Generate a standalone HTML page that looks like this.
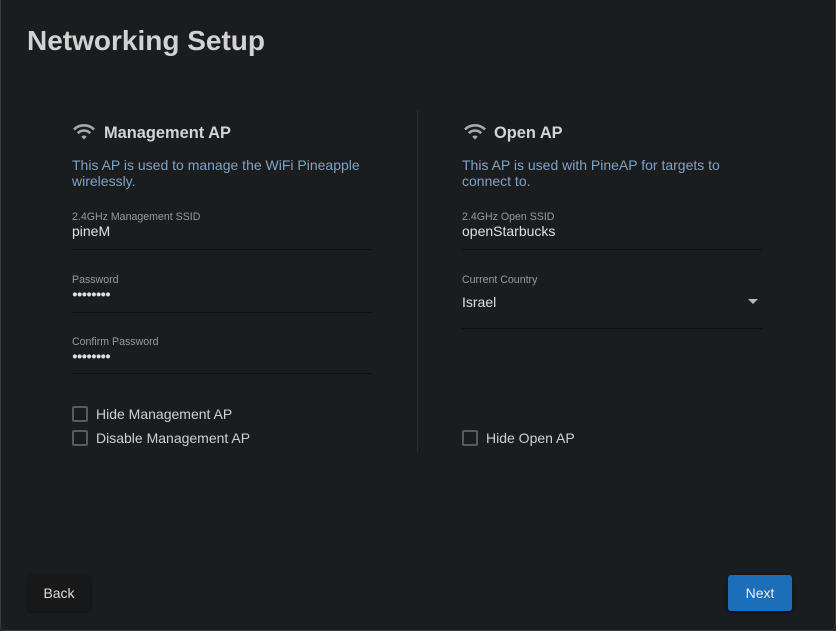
<!DOCTYPE html>
<html><head><style>
*{margin:0;padding:0;box-sizing:border-box}
body{width:836px;height:631px;background:#1b1c1e;font-family:"Liberation Sans",sans-serif;position:relative;overflow:hidden}
.frame{position:absolute;left:0;top:0;width:836px;height:631px;border:1px solid #3a3b3d;border-top:none;border-radius:0 0 4px 4px}
.a{position:absolute;white-space:nowrap}
h1{position:absolute;left:27px;top:25px;font-size:28px;font-weight:bold;color:#d2d2d2}
.h2{font-size:16.4px;font-weight:bold;color:#d4d4d4}
.desc{font-size:14px;color:#7fa3c4;line-height:16px}
.lbl{font-size:10.6px;color:#9a9a9a}
.val{font-size:14px;color:#e0e0e0}
.dots{font-size:9.5px;color:#e0e0e0;letter-spacing:-1px}
.line{position:absolute;height:1px;background:#0f1011}
.cb{position:absolute;width:16px;height:16px;border:2px solid #5a5a5a;border-radius:2px}
.cbl{font-size:14px;color:#d0d0d0}
</style></head><body>
<div class="frame"></div>
<h1>Networking Setup</h1>
<div style="position:absolute;left:417px;top:110px;width:1px;height:342px;background:#2c2d2f"></div>

<svg class="a" style="left:72px;top:123px" width="24" height="18" viewBox="0 0 24 18"><path d="M2 6.5a14 14 0 0 1 20 0" stroke="#a8a8a8" stroke-width="2.6" fill="none"/><path d="M5.8 10.2a8.6 8.6 0 0 1 12.4 0" stroke="#a8a8a8" stroke-width="2.6" fill="none"/><path d="M9.3 13.6l2.7 3 2.7-3a4 4 0 0 0-5.4 0z" fill="#a8a8a8"/></svg>
<div class="a h2" style="left:104px;top:124px">Management AP</div>
<div class="a desc" style="left:72px;top:157px">This AP is used to manage the WiFi Pineapple<br>wirelessly.</div>
<div class="a lbl" style="left:72px;top:211px">2.4GHz Management SSID</div>
<div class="a val" style="left:72px;top:223px">pineM</div>
<div class="line" style="left:72px;top:249px;width:300px"></div>
<div class="a lbl" style="left:72px;top:274px">Password</div>
<div class="a dots" style="left:72px;top:289px">●●●●●●●●</div>
<div class="line" style="left:72px;top:312px;width:300px"></div>
<div class="a lbl" style="left:72px;top:336px">Confirm Password</div>
<div class="a dots" style="left:72px;top:351px">●●●●●●●●</div>
<div class="line" style="left:72px;top:373px;width:300px"></div>
<div class="cb" style="left:72px;top:406px"></div><div class="a cbl" style="left:96px;top:406px">Hide Management AP</div>
<div class="cb" style="left:72px;top:430px"></div><div class="a cbl" style="left:96px;top:430px">Disable Management AP</div>

<svg class="a" style="left:463px;top:123px" width="24" height="18" viewBox="0 0 24 18"><path d="M2 6.5a14 14 0 0 1 20 0" stroke="#a8a8a8" stroke-width="2.6" fill="none"/><path d="M5.8 10.2a8.6 8.6 0 0 1 12.4 0" stroke="#a8a8a8" stroke-width="2.6" fill="none"/><path d="M9.3 13.6l2.7 3 2.7-3a4 4 0 0 0-5.4 0z" fill="#a8a8a8"/></svg>
<div class="a h2" style="left:494px;top:124px">Open AP</div>
<div class="a desc" style="left:462px;top:157px">This AP is used with PineAP for targets to<br>connect to.</div>
<div class="a lbl" style="left:462px;top:211px">2.4GHz Open SSID</div>
<div class="a val" style="left:462px;top:223px">openStarbucks</div>
<div class="line" style="left:462px;top:249px;width:300px"></div>
<div class="a lbl" style="left:462px;top:274px">Current Country</div>
<div class="a val" style="left:462px;top:294px">Israel</div>
<div class="a" style="left:748px;top:299px;width:0;height:0;border-left:5px solid transparent;border-right:5px solid transparent;border-top:5px solid #bbb"></div>
<div class="line" style="left:462px;top:328px;width:300px"></div>
<div class="cb" style="left:462px;top:430px"></div><div class="a cbl" style="left:486px;top:430px">Hide Open AP</div>

<div class="a" style="left:28px;top:575px;width:62px;height:36px;background:#181819;border-radius:3px;box-shadow:0 1px 3px rgba(0,0,0,.5);color:#ddd;font-size:14px;text-align:center;line-height:36px">Back</div>
<div class="a" style="left:728px;top:575px;width:64px;height:36px;background:#1a6fb8;border-radius:3px;box-shadow:0 1px 3px rgba(0,0,0,.5);color:#eef;font-size:14px;text-align:center;line-height:36px">Next</div>
</body></html>
